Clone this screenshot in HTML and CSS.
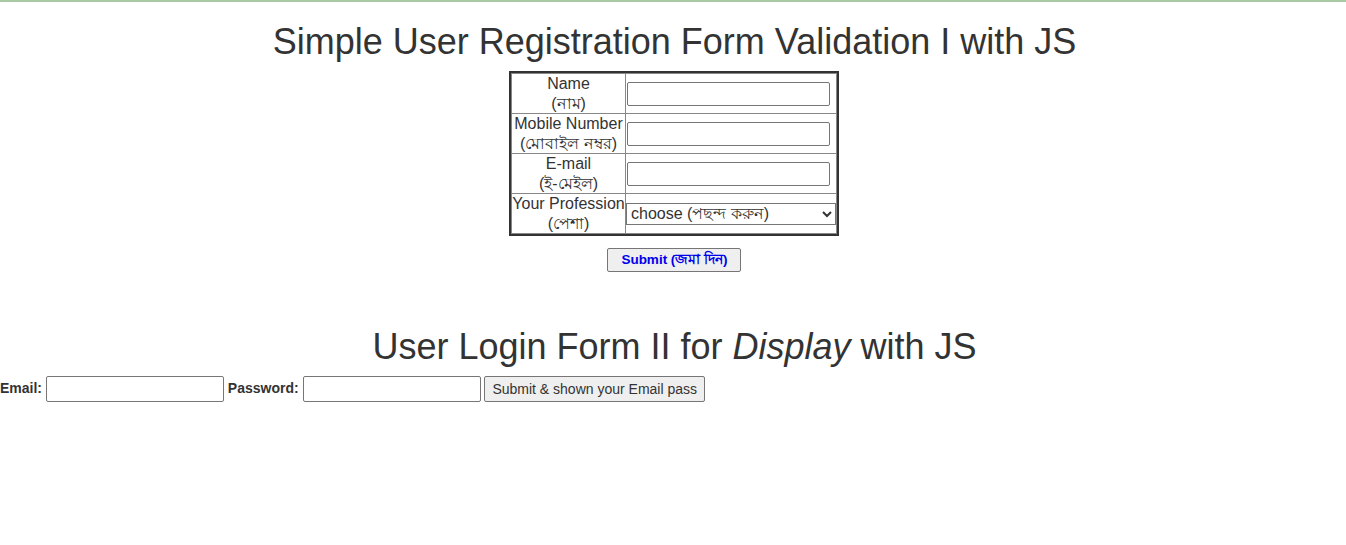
FILE: index.html
```html
<!DOCTYPE html>
<html>
<head>
<meta charset="utf-8">
<link rel="stylesheet" href="styles.css">
</head>
<body>
<div class="topline"></div>
<h1 class="title">Simple User Registration Form Validation I with JS</h1>
<form class="reg">
  <table class="regtable">
    <tr><td class="lbl">Name<br>(নাম)</td><td class="fld"><input type="text" class="txt"></td></tr>
    <tr><td class="lbl">Mobile Number<br>(মোবাইল নম্বর)</td><td class="fld"><input type="text" class="txt"></td></tr>
    <tr><td class="lbl">E-mail<br>(ই-মেইল)</td><td class="fld"><input type="text" class="txt"></td></tr>
    <tr><td class="lbl">Your Profession<br>(পেশা)</td><td class="fld"><select class="sel"><option>choose (পছন্দ করুন)</option></select></td></tr>
  </table>
  <div class="btnrow"><button type="button" class="submit">Submit (জমা দিন)</button></div>
</form>
<h1 class="title title2">User Login Form II for <i>Display</i> with JS</h1>
<form class="login">
  <label class="ll">Email:</label> <input type="text" class="lin"> <label class="ll">Password:</label> <input type="password" class="lin"> <button type="button" class="lbtn">Submit &amp; shown your Email pass</button>
</form>
</body>
</html>
```
FILE: styles.css
```css
html, body { margin: 0; padding: 0; background: #fff; }
body { font-family: "Liberation Sans", Arial, "Noto Sans", sans-serif; color: #333; }
.topline { height: 2px; background: #a9c9a4; }
.title { font-weight: normal; font-size: 36px; text-align: center; margin: 19px 0 9px; padding-left: 3px; line-height: 1.15; }
.title2 { margin: 54px 0 8px; }
.reg { padding-left: 2px; }
.regtable { margin: 0 auto; border: 2px solid #333; border-collapse: separate; border-spacing: 0; }
.regtable td { border-left: 1px solid #888; border-top: 1px solid #888; padding: 0; font-size: 16px; line-height: 19.5px; height: 39px; box-sizing: border-box; }
.regtable tr:last-child td { border-bottom: 1px solid #888; height: 40px; }
.regtable td.fld { border-right: 1px solid #888; }
.lbl { text-align: center; width: 114px; white-space: nowrap; }
.fld { width: 210px; vertical-align: middle; }
.txt { width: 203px; height: 24px; box-sizing: border-box; border: 1px solid #767676; border-radius: 2px; padding: 1px 2px; font-size: 13px; margin: 0 0 0 1px; display: block; }
.sel { width: 210px; height: 22px; box-sizing: border-box; font-size: 16px; font-family: inherit; color: #333; margin: 0; border: 1px solid #767676; border-radius: 0; background: #fff; display: block; }
.btnrow { text-align: center; margin-top: 12px; height: 24px; }
.submit { font-weight: bold; color: #0000ee; font-size: 13.5px; font-family: inherit; height: 24px; padding: 0 12px 0 13px; border: 1px solid #767676; border-radius: 2px; background: #efefef; }
.login { font-size: 14px; }
.ll { font-weight: bold; }
.lin { width: 178px; height: 26px; box-sizing: border-box; border: 1px solid #767676; border-radius: 2px; padding: 1px 2px; margin: 0; vertical-align: middle; }
.lbtn { font-size: 14px; font-family: inherit; color: #333; height: 26px; padding: 0 7px; border: 1px solid #767676; border-radius: 2px; background: #efefef; vertical-align: middle; }
```
